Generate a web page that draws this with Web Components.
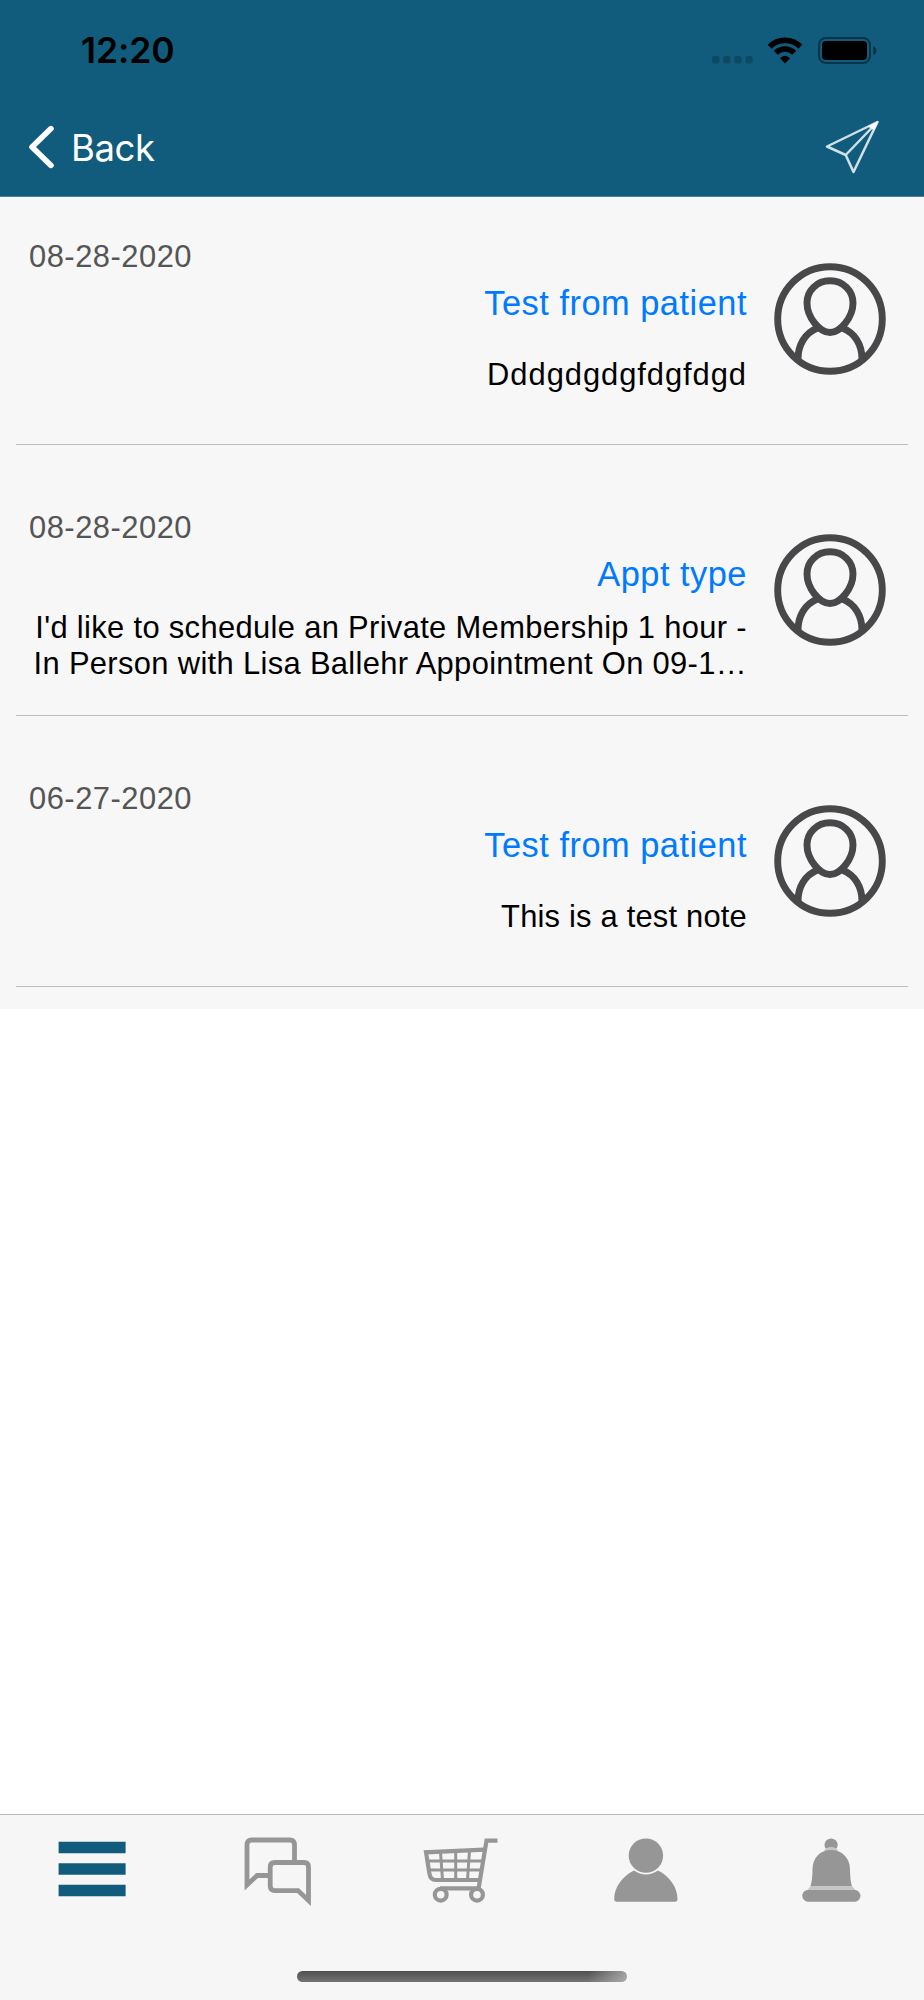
<!DOCTYPE html>
<html lang="en">
<head>
<meta charset="utf-8">
<meta name="viewport" content="width=device-width, initial-scale=1">
<title>Messages</title>
<style>
  body {
    margin: 0;
    background: #fff;
    font-family: "Liberation Sans", Arial, sans-serif;
  }
</style>
</head>
<body>
<app-screen>
  <status-bar slot="top">12:20</status-bar>
  <nav-bar slot="top">Back</nav-bar>
  <message-row>
    <span slot="date">08-28-2020</span>
    <span slot="title">Test from patient</span>
    <span slot="text" style="letter-spacing: 0.95px">Dddgdgdgfdgfdgd</span>
  </message-row>
  <message-row>
    <span slot="date">08-28-2020</span>
    <span slot="title">Appt type</span>
    <span slot="text">I'd like to schedule an Private Membership 1 hour -<br>In Person with Lisa Ballehr Appointment On 09-1…</span>
  </message-row>
  <message-row>
    <span slot="date">06-27-2020</span>
    <span slot="title">Test from patient</span>
    <span slot="text" style="letter-spacing: 0.2px">This is a test note</span>
  </message-row>
  <tab-bar slot="bottom"></tab-bar>
</app-screen>

<script>
class AppScreen extends HTMLElement {
  connectedCallback() {
    this.attachShadow({ mode: 'open' });
    this.shadowRoot.innerHTML = `
      <style>
        :host {
          display: flex;
          flex-direction: column;
          height: 2000px;
          overflow: hidden;
        }
        header {
          box-sizing: border-box;
          height: 197px;
          background: #115c7c;
          border-bottom: 1px solid #4b829a;
        }
        main {
          flex: 1;
        }
      </style>
      <header><slot name="top"></slot></header>
      <main><slot></slot></main>
      <slot name="bottom"></slot>
    `;
  }
}
customElements.define('app-screen', AppScreen);

class StatusBar extends HTMLElement {
  connectedCallback() {
    this.attachShadow({ mode: 'open' });
    this.shadowRoot.innerHTML = `
      <style>
        :host {
          display: flex;
          justify-content: space-between;
          align-items: center;
          box-sizing: border-box;
          height: 100px;
          padding: 2px 46px 0 81px;
          font: 600 35.5px/44px Inter, sans-serif;
          letter-spacing: -0.1px;
          color: #000;
        }
        svg {
          display: block;
          margin-bottom: 2px;
        }
      </style>
      <time><slot></slot></time>
      <svg width="166" height="28" viewBox="0 0 166 28">
        <g fill="#000" fill-opacity="0.2">
          <rect x="0" y="20" width="7.4" height="7.4" rx="2"/>
          <rect x="11.1" y="20" width="7.4" height="7.4" rx="2"/>
          <rect x="22.3" y="20" width="7.4" height="7.4" rx="2"/>
          <rect x="33.4" y="20" width="7.4" height="7.4" rx="2"/>
        </g>
        <g fill="none" stroke="#000" stroke-width="5.7">
          <path d="M57.7 10.7A21.7 21.7 0 0 1 88.3 10.7"/>
          <path d="M63.8 16.8A13 13 0 0 1 82.2 16.8"/>
        </g>
        <path d="M68 22.3Q73 17 78 22.3L73 27.5Z"/>
        <rect x="107" y="2" width="51" height="25" rx="7" fill="none" stroke="#000" stroke-opacity="0.42" stroke-width="2"/>
        <rect x="110" y="5" width="45" height="19" rx="4"/>
        <path d="M161.3 10Q164.3 11.5 164.3 14.5T161.3 19Z" fill-opacity="0.45"/>
      </svg>
    `;
  }
}
customElements.define('status-bar', StatusBar);

class NavBar extends HTMLElement {
  connectedCallback() {
    this.attachShadow({ mode: 'open' });
    this.shadowRoot.innerHTML = `
      <style>
        :host {
          display: flex;
          align-items: center;
          box-sizing: border-box;
          height: 94px;
          padding: 0 40px 0 28px;
          color: #fff;
          font: 400 36.5px/44px Inter, sans-serif;
          letter-spacing: -0.4px;
        }
        svg {
          display: block;
        }
        .label {
          flex: 1;
          padding: 1px 0 0 16px;
        }
      </style>
      <svg width="27" height="44" viewBox="0 0 27 44">
        <path d="M23 3.6L4 22L23 40.4" fill="none" stroke="#fff" stroke-width="5.6" stroke-linecap="round" stroke-linejoin="round"/>
      </svg>
      <span class="label"><slot></slot></span>
      <svg width="64" height="64" viewBox="0 0 64 64">
        <path d="M7 31.5L57.5 7L33.5 57L25.7 40ZM25.7 40L55 9.5" fill="none" stroke="#d0e0e7" stroke-width="2.5" stroke-linejoin="round"/>
        <path d="M58.5 6L48 11.5L54 15Z" fill="#fff"/>
      </svg>
    `;
  }
}
customElements.define('nav-bar', NavBar);

class MessageRow extends HTMLElement {
  connectedCallback() {
    this.attachShadow({ mode: 'open' });
    this.shadowRoot.innerHTML = `
      <style>
        :host {
          display: block;
          box-sizing: border-box;
          height: 271px;
          padding: 0 16px;
          background: #f7f7f7;
        }
        :host(:last-of-type) {
          height: 270px;
        }
        .row {
          display: flex;
          justify-content: space-between;
          box-sizing: border-box;
          height: 248px;
          padding: 42px 22px 0 13px;
          border-bottom: 1px solid #bdbdbd;
        }
        .message {
          width: 718px;
          display: flex;
          flex-direction: column;
          text-align: right;
          white-space: nowrap;
        }
        .date {
          text-align: left;
          font-size: 30.9px;
          line-height: 36px;
          letter-spacing: 0.5px;
          color: #555;
        }
        .title {
          margin-top: 8px;
          font-size: 34.4px;
          line-height: 40px;
          letter-spacing: 0.5px;
          color: #007aff;
        }
        .text {
          display: flex;
          align-items: center;
          justify-content: flex-end;
          height: 72px;
          margin-top: 16px;
          font-size: 30.9px;
          line-height: 36px;
          letter-spacing: 0.34px;
          color: #000;
        }
        svg {
          display: block;
          margin-top: 24px;
        }
      </style>
      <div class="row">
        <div class="message">
          <div class="date"><slot name="date"></slot></div>
          <div class="title"><slot name="title"></slot></div>
          <div class="text"><slot name="text"></slot></div>
        </div>
        <svg width="112" height="112" viewBox="0 0 112 112" fill="none" stroke="#48484a" stroke-width="6.900">
          <circle cx="56" cy="56" r="52.3"/>
          <path d="M56 17.800C69 17.800 79 27.500 79 40C79 54 66.500 69.500 56 69.500S33 54 33 40C33 27.500 43 17.800 56 17.800Z"/>
          <path d="M43.500 65C31 70 24 82 24 96M68.500 65C81 70 88 82 88 96"/>
        </svg>
      </div>
    `;
  }
}
customElements.define('message-row', MessageRow);

class TabBar extends HTMLElement {
  connectedCallback() {
    this.attachShadow({ mode: 'open' });
    this.shadowRoot.innerHTML = `
      <style>
        :host {
          display: flex;
          flex-direction: column;
          justify-content: space-between;
          align-items: center;
          box-sizing: border-box;
          height: 186px;
          padding: 17px 0 18px;
          background: #f6f6f6;
          border-top: 1px solid #bcbcbc;
        }
        nav {
          display: grid;
          grid-template-columns: repeat(5, 1fr);
          justify-items: center;
          width: 100%;
          color: #969696;
        }
        .active {
          color: #115c7c;
        }
        svg {
          display: block;
        }
        .home {
          width: 330px;
          height: 11px;
          border-radius: 6px;
          background:
            linear-gradient(100deg, transparent 88%, rgba(190, 190, 190, 0.75) 100%),
            linear-gradient(#505050, #747474);
        }
      </style>
      <nav>
        <svg class="active" width="80" height="80" viewBox="0 0 80 80" fill="currentColor">
          <path d="M6.600 9.700h67v11.600h-67zM6.600 31.200h67v11.600h-67zM6.600 52.700h67v11.600h-67z"/>
        </svg>
        <svg width="80" height="80" viewBox="0 0 80 80" fill="none" stroke="currentColor" stroke-width="4.800">
          <path d="M57.500 30V12.500Q57.500 8 53 8H14.500Q10 8 10 12.500V53L20 43.500H32"/>
          <path d="M38 30.500H67Q71.500 30.500 71.500 35V68.500L61 58.600H38Q33.200 58.600 33.200 54V35Q33.200 30.500 38 30.500Z"/>
        </svg>
        <svg width="80" height="80" viewBox="0 0 80 80" fill="none" stroke="currentColor" stroke-width="4.200">
          <path d="M75.500 8.600H64.500L56.600 56.300H18"/>
          <path d="M62 17.700L4 20.300L7.500 42Q8.500 48 14 48H57.500"/>
          <path d="M5 29H61M6.500 38H59.500M18.500 20L20.500 48M33.700 19V48M47.500 18.500L45.500 48" stroke-width="3"/>
          <circle cx="18.700" cy="62.700" r="5.900"/>
          <circle cx="55" cy="62.700" r="5.900"/>
        </svg>
        <svg width="80" height="80" viewBox="0 0 80 80" fill="currentColor">
          <circle cx="38.900" cy="23.600" r="17.200"/>
          <path d="M27 38.600Q38.900 46.500 51 38.600C62 44 70.500 55 70.500 67Q70.500 69.700 68 69.700H9.700Q7.200 69.700 7.200 67C7.200 55 16 44 27 38.600Z"/>
        </svg>
        <svg width="80" height="80" viewBox="0 0 80 80" fill="currentColor">
          <path d="M33.500 16.500A6.600 6.600 0 1 1 44.700 16.500Q39 14.500 33.500 16.500Z"/>
          <path d="M33.500 16.500Q39 14.500 44.700 16.500L46 19H32Z" fill="#c6c6c6"/>
          <path d="M39 18C50 18 58 26 58 37Q58 48 60 54.500H18.400Q20.500 48 20.500 37C20.500 26 28 18 39 18Z"/>
          <path d="M18 54.500H60.500L64 59H15Z" fill="#c6c6c6"/>
          <path d="M15 58H63.500A5.850 5.850 0 0 1 61.500 69.700H17.500A5.850 5.850 0 0 1 15 58Z"/>
        </svg>
      </nav>
      <div class="home"></div>
    `;
  }
}
customElements.define('tab-bar', TabBar);
</script>
</body>
</html>
